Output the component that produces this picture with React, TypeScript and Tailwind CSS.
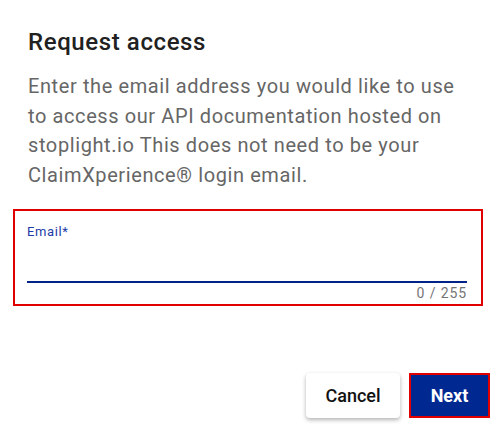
export default function App() {
  return (
    <div className="w-[496px] h-[436px] bg-white font-['Roboto',sans-serif] relative overflow-hidden">
      <div className="px-[28px] pt-[26px]">
        <h2 className="text-[24px] leading-[32px] font-medium tracking-[0.6px] text-[#212121]">Request access</h2>
        <p className="mt-[14px] text-[20px] leading-[29.7px] tracking-[0.6px] text-[#666666] w-[440px]">
          Enter the email address you would like to use to access our API documentation hosted on stoplight.io This
          does not need to be your ClaimXperience® login email.
        </p>
      </div>

      <div className="mt-[18px] ml-[13px] w-[470px] h-[97px] border-2 border-[#e00000] pl-[12px] pr-[14px] pt-[13px]">
        <label className="block text-[13px] leading-[16px] tracking-[0.6px] text-[#1e3ca8]">Email*</label>
        <input
          type="email"
          maxLength={255}
          className="block w-full h-[43px] outline-none border-b-2 border-[#002387] text-[16px] text-[#212121] bg-transparent"
        />
        <div className="text-right text-[14px] leading-[20px] tracking-[0.9px] text-[#757575]">0 / 255</div>
      </div>

      <div className="flex justify-end gap-[9px] pr-[6px] mt-[67px]">
        <button className="w-[94px] h-[45px] rounded-[4px] bg-white text-[18px] font-medium text-[#111] shadow-[0_2px_4px_rgba(0,0,0,0.3)]">
          Cancel
        </button>
        <button className="w-[81px] h-[45px] border-2 border-[#e00000] bg-[#002891] text-[18px] font-bold text-white">
          Next
        </button>
      </div>
    </div>
  );
}
